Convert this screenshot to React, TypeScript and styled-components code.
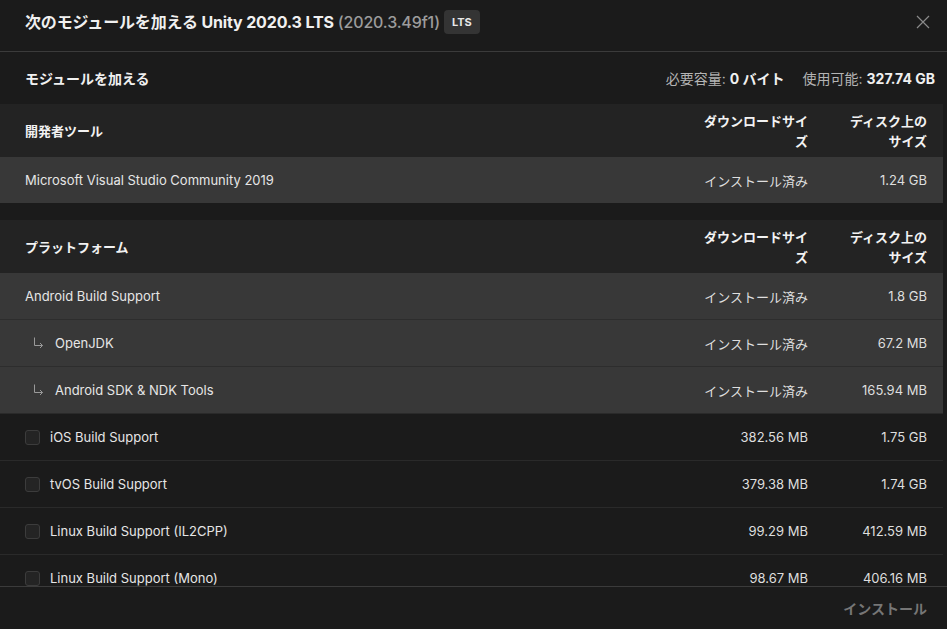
import styled, { createGlobalStyle } from 'styled-components'

type Module = {
  name: string
  download: string
  disk: string
  installed?: boolean
  child?: boolean
}

type Group = {
  title: string
  modules: Module[]
}

const groups: Group[] = [
  {
    title: '開発者ツール',
    modules: [
      { name: 'Microsoft Visual Studio Community 2019', download: 'インストール済み', disk: '1.24 GB', installed: true },
    ],
  },
  {
    title: 'プラットフォーム',
    modules: [
      { name: 'Android Build Support', download: 'インストール済み', disk: '1.8 GB', installed: true },
      { name: 'OpenJDK', download: 'インストール済み', disk: '67.2 MB', installed: true, child: true },
      { name: 'Android SDK & NDK Tools', download: 'インストール済み', disk: '165.94 MB', installed: true, child: true },
      { name: 'iOS Build Support', download: '382.56 MB', disk: '1.75 GB' },
      { name: 'tvOS Build Support', download: '379.38 MB', disk: '1.74 GB' },
      { name: 'Linux Build Support (IL2CPP)', download: '99.29 MB', disk: '412.59 MB' },
      { name: 'Linux Build Support (Mono)', download: '98.67 MB', disk: '406.16 MB' },
    ],
  },
]

const GlobalStyle = createGlobalStyle`
  body {
    margin: 0;
    background: #1b1b1b;
    font-family: Inter, "Noto Sans CJK JP", sans-serif;
    color: #e2e2e2;
  }
`

const Dialog = styled.div`
  height: 629px;
  display: flex;
  flex-direction: column;
  background: #1b1b1b;
  overflow: hidden;
`

const Header = styled.header`
  height: 52px;
  border-bottom: 1px solid #3b3b3b;
  display: flex;
  align-items: flex-start;
  padding: 10px 16px 0 25px;
  box-sizing: border-box;
  flex-shrink: 0;
`

const Title = styled.h1`
  margin: 0;
  font-size: 16px;
  line-height: 24px;
  font-weight: 700;
  letter-spacing: -0.15px;
  color: #f0f0f0;
  display: flex;
  align-items: center;
  gap: 4px;
  flex: 1;
`

const Version = styled.span`
  color: #9c9c9c;
  font-weight: 500;
`

const Badge = styled.span`
  background: #343434;
  color: #e8e8e8;
  font-size: 11px;
  font-weight: 700;
  letter-spacing: 0;
  border-radius: 4px;
  padding: 0 8px;
  line-height: 24px;
`

const CloseButton = styled.button`
  background: none;
  border: none;
  padding: 0;
  margin-top: 4px;
  width: 16px;
  height: 16px;
  color: #8a8a8a;
  cursor: pointer;
`

const SubHeader = styled.div`
  height: 52px;
  display: flex;
  align-items: center;
  justify-content: space-between;
  padding: 0 12px 0 25px;
  flex-shrink: 0;
  font-size: 14px;
`

const SubTitle = styled.h2`
  margin: 0;
  font-size: 14px;
  font-weight: 700;
  color: #f0f0f0;
`

const Storage = styled.div`
  color: #b4b4b4;
  display: flex;
  gap: 18px;

  b {
    color: #f0f0f0;
    font-weight: 700;
  }
`

const List = styled.div`
  flex: 1;
  overflow: hidden;
  padding-right: 4px;
  display: flex;
  flex-direction: column;
  gap: 17px;
`

const GroupBlock = styled.section`
  display: flex;
  flex-direction: column;
`

const Row = styled.div<{ $installed?: boolean }>`
  display: grid;
  grid-template-columns: 1fr 110px 80px;
  column-gap: 39px;
  align-items: center;
  height: 47px;
  padding: 0 16px 0 25px;
  box-sizing: border-box;
  font-size: 13px;
  background: ${(p) => (p.$installed ? '#383838' : '#1b1b1b')};
  border-top: 1px solid ${(p) => (p.$installed ? '#2d2d2d' : '#2a2a2a')};

  &:first-of-type {
    border-top: none;
    height: 46px;
  }
`

const HeadRow = styled.div`
  display: grid;
  grid-template-columns: 1fr 110px 80px;
  column-gap: 39px;
  align-items: center;
  height: 53px;
  padding: 0 16px 0 25px;
  box-sizing: border-box;
  background: #232323;
  font-size: 13px;
  font-weight: 700;
  color: #f2f2f2;
  line-height: 20px;
`

const ColHead = styled.div`
  text-align: right;
`

const NameCell = styled.div<{ $child?: boolean }>`
  display: flex;
  align-items: center;
  gap: 10px;
  color: #e6e6e6;
  padding-left: ${(p) => (p.$child ? '7px' : '0')};
`

const ChildArrow = styled.svg`
  width: 13px;
  height: 13px;
  flex-shrink: 0;
  color: #9a9a9a;
  margin-top: -2px;
`

const Checkbox = styled.span`
  width: 15px;
  height: 15px;
  box-sizing: border-box;
  border: 1px solid #3c3c3c;
  border-radius: 3px;
  background: #242424;
  flex-shrink: 0;
`

const ValueCell = styled.div`
  text-align: right;
  color: #dedede;
`

const Footer = styled.footer`
  height: 43px;
  border-top: 1px solid #3b3b3b;
  display: flex;
  align-items: center;
  justify-content: flex-end;
  padding: 0 20px 0 25px;
  box-sizing: border-box;
  flex-shrink: 0;
`

const InstallButton = styled.button`
  background: none;
  border: none;
  padding: 0;
  font-family: inherit;
  font-size: 14px;
  font-weight: 700;
  color: #767676;
  cursor: default;
`

export default function App () {
  return (
    <Dialog>
      <GlobalStyle />
      <Header>
        <Title>
          次のモジュールを加える Unity 2020.3 LTS <Version>(2020.3.49f1)</Version>
          <Badge>LTS</Badge>
        </Title>
        <CloseButton aria-label='閉じる'>
          <svg width='16' height='16' viewBox='0 0 16 16' fill='none' stroke='currentColor' strokeWidth='1.2'>
            <path d='M2 2L14 14M14 2L2 14' />
          </svg>
        </CloseButton>
      </Header>

      <SubHeader>
        <SubTitle>モジュールを加える</SubTitle>
        <Storage>
          <span>必要容量: <b>0 バイト</b></span>
          <span>使用可能: <b>327.74 GB</b></span>
        </Storage>
      </SubHeader>

      <List>
        {groups.map((group) => (
          <GroupBlock key={group.title}>
            <HeadRow>
              <div>{group.title}</div>
              <ColHead>ダウンロードサイズ</ColHead>
              <ColHead>ディスク上のサイズ</ColHead>
            </HeadRow>
            <div>
              {group.modules.map((m) => (
                <Row key={m.name} $installed={m.installed}>
                  <NameCell $child={m.child}>
                    {m.child && (
                      <ChildArrow viewBox='0 0 13 13' fill='none' stroke='currentColor' strokeWidth='1'>
                        <path d='M2.5 1.5V9.5H10.5M8 7L10.5 9.5L8 12' />
                      </ChildArrow>
                    )}
                    {!m.installed && <Checkbox />}
                    <span>{m.name}</span>
                  </NameCell>
                  <ValueCell>{m.download}</ValueCell>
                  <ValueCell>{m.disk}</ValueCell>
                </Row>
              ))}
            </div>
          </GroupBlock>
        ))}
      </List>

      <Footer>
        <InstallButton disabled>インストール</InstallButton>
      </Footer>
    </Dialog>
  )
}
